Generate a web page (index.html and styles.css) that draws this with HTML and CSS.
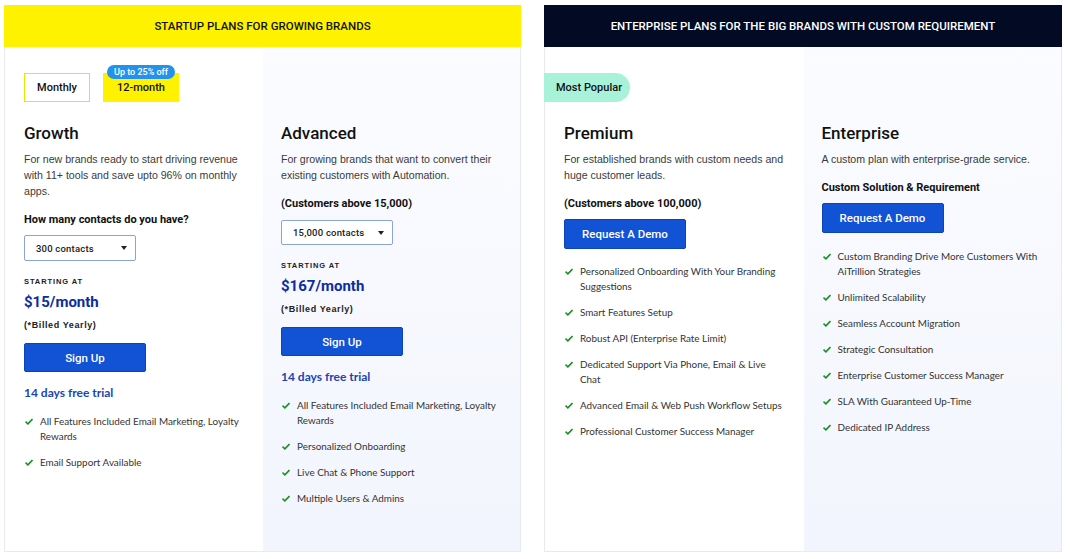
FILE: index.html
```html
<!DOCTYPE html>
<html>
<head>
<meta charset="utf-8">
<link rel="stylesheet" href="styles.css">
</head>
<body>
<div class="wrap">
  <section class="panel startup">
    <header class="phead yellow">STARTUP PLANS FOR GROWING BRANDS</header>
    <div class="cols">
      <div class="col white">
        <div class="topslot">
          <div class="toggle">
            <div class="tbtn monthly">Monthly</div>
            <div class="tbtn yearly"><span class="badge">Up to 25% off</span>12-month</div>
          </div>
        </div>
        <h2 class="title">Growth</h2>
        <p class="desc">For new brands ready to start driving revenue with 11+ tools and save upto 96% on monthly apps.</p>
        <div class="label">How many contacts do you have?</div>
        <div class="select s1"><span>300 contacts</span><i class="caret"></i></div>
        <div class="starting">STARTING AT</div>
        <div class="price">$15/month</div>
        <div class="billed">(*Billed Yearly)</div>
        <div class="btn">Sign Up</div>
        <div class="trial">14 days free trial</div>
        <ul class="feats">
          <li><svg class="chk" viewBox="0 0 10 8"><path d="M0.6 4.2 L3.6 7 L9.4 1" /></svg><span>All Features Included Email Marketing, Loyalty Rewards</span></li>
          <li><svg class="chk" viewBox="0 0 10 8"><path d="M0.6 4.2 L3.6 7 L9.4 1" /></svg><span>Email Support Available</span></li>
        </ul>
      </div>
      <div class="col tint">
        <div class="topslot"></div>
        <h2 class="title">Advanced</h2>
        <p class="desc">For growing brands that want to convert their existing customers with Automation.</p>
        <div class="label">(Customers above 15,000)</div>
        <div class="select s2"><span>15,000 contacts</span><i class="caret"></i></div>
        <div class="starting">STARTING AT</div>
        <div class="price">$167/month</div>
        <div class="billed">(*Billed Yearly)</div>
        <div class="btn">Sign Up</div>
        <div class="trial">14 days free trial</div>
        <ul class="feats">
          <li><svg class="chk" viewBox="0 0 10 8"><path d="M0.6 4.2 L3.6 7 L9.4 1" /></svg><span>All Features Included Email Marketing, Loyalty Rewards</span></li>
          <li><svg class="chk" viewBox="0 0 10 8"><path d="M0.6 4.2 L3.6 7 L9.4 1" /></svg><span>Personalized Onboarding</span></li>
          <li><svg class="chk" viewBox="0 0 10 8"><path d="M0.6 4.2 L3.6 7 L9.4 1" /></svg><span>Live Chat &amp; Phone Support</span></li>
          <li><svg class="chk" viewBox="0 0 10 8"><path d="M0.6 4.2 L3.6 7 L9.4 1" /></svg><span>Multiple Users &amp; Admins</span></li>
        </ul>
      </div>
    </div>
  </section>
  <section class="panel enterprise">
    <header class="phead navy">ENTERPRISE PLANS FOR THE BIG BRANDS WITH CUSTOM REQUIREMENT</header>
    <div class="cols">
      <div class="col white">
        <div class="topslot"><div class="popular">Most Popular</div></div>
        <h2 class="title">Premium</h2>
        <p class="desc">For established brands with custom needs and huge customer leads.</p>
        <div class="label">(Customers above 100,000)</div>
        <div class="btn demo">Request A Demo</div>
        <ul class="feats f-prem">
          <li><svg class="chk" viewBox="0 0 10 8"><path d="M0.6 4.2 L3.6 7 L9.4 1" /></svg><span>Personalized Onboarding With Your Branding Suggestions</span></li>
          <li><svg class="chk" viewBox="0 0 10 8"><path d="M0.6 4.2 L3.6 7 L9.4 1" /></svg><span>Smart Features Setup</span></li>
          <li><svg class="chk" viewBox="0 0 10 8"><path d="M0.6 4.2 L3.6 7 L9.4 1" /></svg><span>Robust API (Enterprise Rate Limit)</span></li>
          <li><svg class="chk" viewBox="0 0 10 8"><path d="M0.6 4.2 L3.6 7 L9.4 1" /></svg><span>Dedicated Support Via Phone, Email &amp; Live Chat</span></li>
          <li><svg class="chk" viewBox="0 0 10 8"><path d="M0.6 4.2 L3.6 7 L9.4 1" /></svg><span>Advanced Email &amp; Web Push Workflow Setups</span></li>
          <li><svg class="chk" viewBox="0 0 10 8"><path d="M0.6 4.2 L3.6 7 L9.4 1" /></svg><span>Professional Customer Success Manager</span></li>
        </ul>
      </div>
      <div class="col tint">
        <div class="topslot"></div>
        <h2 class="title">Enterprise</h2>
        <p class="desc">A custom plan with enterprise-grade service.</p>
        <div class="label">Custom Solution &amp; Requirement</div>
        <div class="btn demo">Request A Demo</div>
        <ul class="feats f-ent">
          <li><svg class="chk" viewBox="0 0 10 8"><path d="M0.6 4.2 L3.6 7 L9.4 1" /></svg><span>Custom Branding Drive More Customers With AiTrillion Strategies</span></li>
          <li><svg class="chk" viewBox="0 0 10 8"><path d="M0.6 4.2 L3.6 7 L9.4 1" /></svg><span>Unlimited Scalability</span></li>
          <li><svg class="chk" viewBox="0 0 10 8"><path d="M0.6 4.2 L3.6 7 L9.4 1" /></svg><span>Seamless Account Migration</span></li>
          <li><svg class="chk" viewBox="0 0 10 8"><path d="M0.6 4.2 L3.6 7 L9.4 1" /></svg><span>Strategic Consultation</span></li>
          <li><svg class="chk" viewBox="0 0 10 8"><path d="M0.6 4.2 L3.6 7 L9.4 1" /></svg><span>Enterprise Customer Success Manager</span></li>
          <li><svg class="chk" viewBox="0 0 10 8"><path d="M0.6 4.2 L3.6 7 L9.4 1" /></svg><span>SLA With Guaranteed Up-Time</span></li>
          <li><svg class="chk" viewBox="0 0 10 8"><path d="M0.6 4.2 L3.6 7 L9.4 1" /></svg><span>Dedicated IP Address</span></li>
        </ul>
      </div>
    </div>
  </section>
</div>
</body>
</html>
```

FILE: styles.css
```css
* { box-sizing: border-box; }
html, body { margin: 0; padding: 0; background: #fff; }
body { font-family: Roboto, "Liberation Sans", Arial, sans-serif; color: #111; }

.wrap {
  display: flex;
  gap: 23px;
  padding: 5px 8px 0 4px;
}
.panel { display: flex; flex-direction: column; }
.startup { width: 517px; }
.enterprise { width: 518px; }

.phead {
  height: 42px;
  display: flex;
  align-items: center;
  justify-content: center;
  font-size: 11.5px;
  font-weight: 500;
}
.yellow { background: #fff200; color: #111; }
.navy { background: #020a24; color: #fff; }

.cols {
  display: flex;
  height: 505px;
  border: 1px solid #e6ebf3;
  border-top: none;
}
.col {
  flex: 1 1 0;
  padding: 26px 12px 0 19px;
  display: flex;
  flex-direction: column;
  align-items: flex-start;
}
.white { background: #fff; }
.tint { background: linear-gradient(180deg, #fbfcff 0%, #f2f5fd 100%); padding-left: 18px; }

.topslot { height: 29px; margin-bottom: 21px; position: relative; width: 100%; }

.toggle { display: flex; gap: 13px; }
.tbtn {
  height: 29px;
  display: flex;
  align-items: center;
  justify-content: center;
  font-size: 11px;
  font-weight: 500;
  color: #111;
  position: relative;
}
.monthly { width: 66px; border: 1px solid #f2e200; background: #fff; }
.yearly { width: 76px; background: #fff200; }
.badge {
  position: absolute;
  top: -8px;
  left: 4px;
  width: 68px;
  height: 14px;
  border-radius: 7px;
  background: #2293ec;
  color: #fff;
  font-size: 9px;
  font-weight: 500;
  line-height: 14px;
  text-align: center;
}

.popular {
  position: absolute;
  left: -20px;
  top: 0;
  height: 29px;
  width: 86px;
  background: #a8f2da;
  border-radius: 0 15px 15px 0;
  font-size: 11px;
  font-weight: 500;
  display: flex;
  align-items: center;
  padding-left: 12px;
  color: #111;
}

.title {
  margin: 0;
  font-size: 17px;
  line-height: 20px;
  font-weight: 500;
  color: #111;
}
.desc {
  margin: 8px 0 0;
  font-family: "Liberation Sans", Arial, sans-serif;
  font-size: 10.6px;
  line-height: 16px;
  color: #3b3b3b;
  max-width: 222px;
}
.label {
  margin-top: 14px;
  font-size: 11px;
  line-height: 14px;
  font-weight: 700;
  color: #111;
}
.select {
  margin-top: 8px;
  width: 112px;
  height: 26px;
  border: 1px solid #8aa3d8;
  border-radius: 2px;
  background: #fff;
  display: flex;
  align-items: center;
  justify-content: space-between;
  padding: 0 8px 0 11px;
  font-size: 9.5px;
  font-weight: 500;
  color: #222;
  letter-spacing: 0.2px;
}
.s2 { margin-top: 9px; height: 25px; }
.caret {
  width: 0; height: 0;
  border-left: 3.5px solid transparent;
  border-right: 3.5px solid transparent;
  border-top: 4px solid #222;
}
.starting {
  margin-top: 16px;
  font-family: "Liberation Sans", Arial, sans-serif;
  font-size: 7.5px;
  line-height: 10px;
  font-weight: 700;
  letter-spacing: 0.9px;
  color: #222;
}
.price {
  margin-top: 5px;
  font-size: 15px;
  line-height: 20px;
  font-weight: 700;
  color: #0d2d9c;
}
.billed {
  margin-top: 7px;
  font-family: "Liberation Sans", Arial, sans-serif;
  font-size: 9px;
  line-height: 12px;
  font-weight: 700;
  letter-spacing: 0.6px;
  color: #222;
}
.btn {
  margin-top: 12px;
  width: 122px;
  height: 29px;
  background: #1252d5;
  border: 1px solid #0c44b8;
  border-radius: 2px;
  color: #fff;
  font-size: 11.5px;
  font-weight: 500;
  display: flex;
  align-items: center;
  justify-content: center;
}
.demo { margin-top: 8px; height: 30px; }
.trial {
  margin-top: 13px;
  font-family: Lato, "Open Sans", sans-serif;
  font-size: 12px;
  line-height: 16px;
  font-weight: 700;
  color: #1845b6;
}
.feats {
  list-style: none;
  margin: 13px 0 0;
  padding: 0;
  width: 100%;
}
.f-prem { margin-top: 15px; }
.f-ent { margin-top: 16px; }
.feats li {
  display: flex;
  align-items: flex-start;
  margin-bottom: 11px;
  font-family: Lato, "Open Sans", sans-serif;
  font-size: 9.9px;
  line-height: 15px;
  color: #333;
}
.feats li span { flex: 1; }
.f-prem li span, .f-ent li span { max-width: 206px; }
.chk {
  width: 8px;
  height: 7px;
  margin: 4px 7px 0 1px;
  flex: none;
  fill: none;
  stroke: #17911f;
  stroke-width: 2;
}
```
